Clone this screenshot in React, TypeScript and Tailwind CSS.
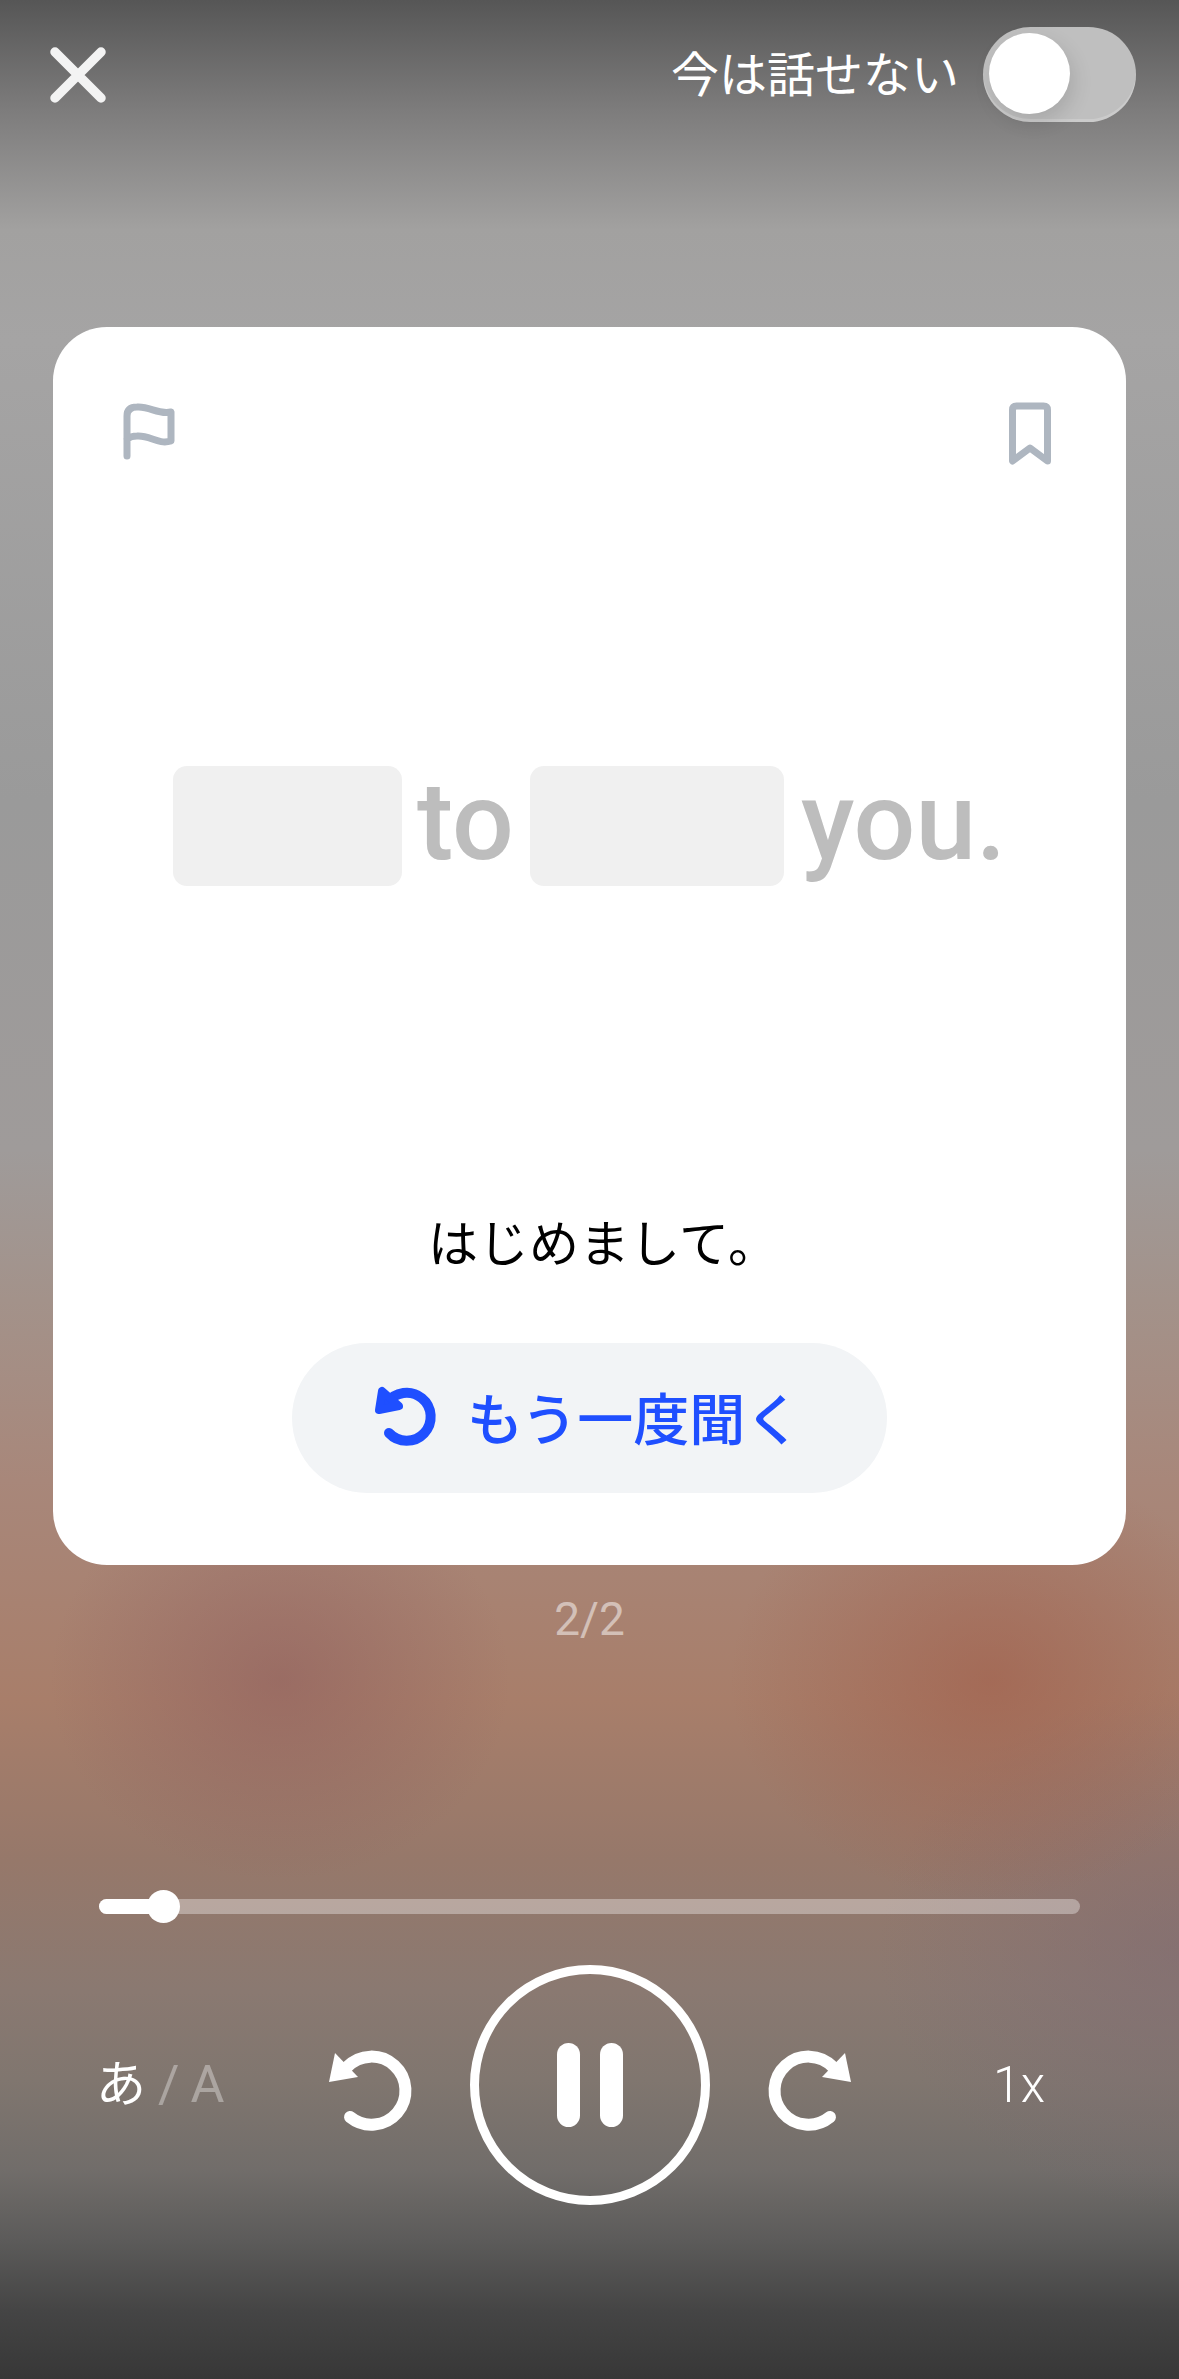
import React from "react";

function Close() {
  return (
    <svg viewBox="0 0 56 56" className="w-[56px] h-[56px]">
      <path d="M5 5 L51 51 M51 5 L5 51" stroke="#f3f3f3" strokeWidth="9.500" strokeLinecap="round" fill="none" />
    </svg>
  );
}

function Flag() {
  return (
    <svg viewBox="0 0 60 60" className="w-[60px] h-[60px]">
      <path
        d="M7 55 V15 Q7 6 17 6 C30 5 38 14 51 11 V40 C38 44 30 34 17 35 Q11 35 7 38"
        stroke="#aeb6c0"
        strokeWidth="7"
        strokeLinecap="round"
        strokeLinejoin="round"
        fill="none"
      />
    </svg>
  );
}

function Bookmark() {
  return (
    <svg viewBox="0 0 50 64" className="w-[50px] h-[64px]">
      <path
        d="M7.500 60 V9 Q7.500 5 11.500 5 H38.500 Q42.500 5 42.500 9 V60 L25 47 Z"
        stroke="#aeb6c0"
        strokeWidth="7"
        strokeLinejoin="round"
        fill="none"
      />
    </svg>
  );
}

function ReplaySmall() {
  return (
    <svg viewBox="0 0 70 70" className="w-[70px] h-[70px] shrink-0">
      <path d="M19 50 A24 24 0 1 0 17 20" stroke="#1f4fff" strokeWidth="10" strokeLinecap="round" fill="none" />
      <path d="M12 8 L9 27 L29 23 Z" stroke="#1f4fff" fill="#1f4fff" strokeWidth="8" strokeLinejoin="round" />
    </svg>
  );
}

function Rewind({ flip }: { flip?: boolean }) {
  return (
    <svg viewBox="0 0 90 90" className={flip ? "w-[90px] h-[90px] mt-[10px] shrink-0 -scale-x-100" : "w-[90px] h-[90px] mt-[10px] shrink-0"}>
      <path d="M25 72 A34 34 0 1 0 22 22" stroke="#ffffff" strokeWidth="12" strokeLinecap="round" fill="none" />
      <path d="M10 8 L4 37 L33 32 Z" fill="#ffffff" />
    </svg>
  );
}

export default function App() {
  return (
    <div className="w-[1179px] h-[2379px] overflow-hidden flex flex-col font-['Roboto','Noto_Sans_CJK_JP',sans-serif] bg-[radial-gradient(ellipse_230px_200px_at_280px_1680px,rgba(140,90,92,0.5),transparent),radial-gradient(ellipse_260px_220px_at_990px_1680px,rgba(160,90,70,0.55),transparent),radial-gradient(ellipse_300px_260px_at_1179px_1950px,rgba(125,105,115,0.5),transparent),linear-gradient(180deg,#565656_0px,#7d7c7c_110px,#a2a1a0_230px,#a5a4a4_340px,#9a9a9a_800px,#9f9b9a_1150px,#a3928a_1300px,#a8877a_1480px,#a87e6a_1700px,#96786a_1860px,#8a7971_1990px,#80766f_2080px,#716d6a_2170px,#5c5b5a_2240px,#454545_2310px,#373737_2379px)]">
      <div className="flex items-center justify-between pl-[50px] pr-[43px] pt-[27px] h-[122px] shrink-0">
        <Close />
        <div className="flex items-center gap-[24px]">
          <span className="text-[48px] leading-[60px] text-white whitespace-nowrap translate-y-[1px]">今は話せない</span>
          <div className="w-[153px] h-[95px] rounded-full bg-[#bfbfbf] p-[6px] flex shadow-[inset_0_-3px_0_rgba(255,255,255,0.2)]">
            <div className="w-[81px] h-[81px] rounded-full bg-white shadow-[4px_8px_20px_rgba(0,0,0,0.12)]" />
          </div>
        </div>
      </div>

      <div className="mt-[205px] mx-[53px] h-[1238px] shrink-0 bg-white rounded-[54px] flex flex-col">
        <div className="flex justify-between items-start pt-[74px] pl-[67px] pr-[71px] h-[139px]">
          <Flag />
          <Bookmark />
        </div>

        <div className="mt-[300px] h-[120px] pl-[120px] flex items-center">
          <div className="w-[229px] h-[120px] rounded-[14px] bg-[#f0f0f0]" />
          <span className="ml-[15px] w-[95px] text-[109px] leading-[120px] font-medium text-[#bdbdbd] -mt-[8px]">to</span>
          <div className="ml-[18px] w-[254px] h-[120px] rounded-[14px] bg-[#f0f0f0]" />
          <span className="ml-[17px] text-[109px] leading-[120px] font-medium text-[#bdbdbd] -mt-[8px]">you.</span>
        </div>

        <div className="mt-[329px] h-[60px] pl-[375px] text-[50px] leading-[60px] tracking-[0.5px] text-black whitespace-nowrap">はじめまして。</div>

        <div className="mt-[68px] ml-[239px] w-[595px] h-[150px] rounded-full bg-[#f2f4f6] flex items-center pl-[78px] gap-[27px]">
          <ReplaySmall />
          <span className="text-[56px] leading-[60px] font-medium text-[#1f4fff] whitespace-nowrap translate-y-[3px]">もう一度聞く</span>
        </div>
      </div>

      <div className="mt-[24px] h-[60px] text-center text-[46px] leading-[60px] font-normal text-white/50">2/2</div>

      <div className="mt-[250px] mx-[99px] w-[981px] h-[15px] rounded-full bg-white/35 relative shrink-0">
        <div className="w-[64px] h-[15px] rounded-full bg-white" />
        <div className="absolute left-[48px] top-[-9px] w-[33px] h-[33px] rounded-full bg-white" />
      </div>

      <div className="mt-[51px] pl-[96px] pr-[134px] flex items-center h-[240px] shrink-0">
        <div className="w-[229px] flex items-center text-[52px] leading-[60px] whitespace-nowrap">
          <span className="text-white text-[50px]">あ</span>
          <span className="text-white/35 ml-[12px]">/</span>
          <span className="text-white/35 ml-[11px]">A</span>
        </div>
        <Rewind />
        <div className="mx-[55px] w-[240px] h-[240px] rounded-full border-[9px] border-white flex items-center justify-center gap-[20px] shrink-0">
          <div className="w-[23px] h-[84px] rounded-full bg-white" />
          <div className="w-[23px] h-[84px] rounded-full bg-white" />
        </div>
        <Rewind flip />
        <div className="flex-1 text-right text-[50px] leading-[60px] font-light text-white">1x</div>
      </div>
    </div>
  );
}
